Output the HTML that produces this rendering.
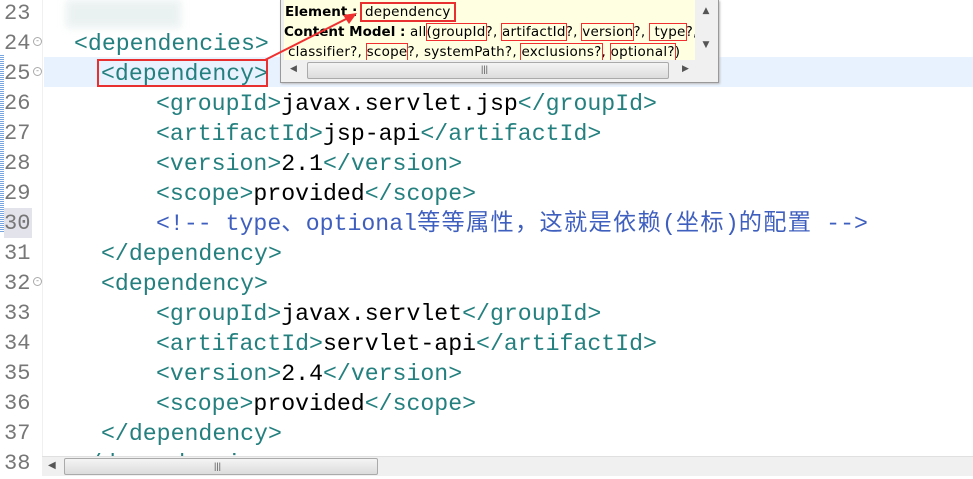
<!DOCTYPE html>
<html><head><meta charset="utf-8"><style>
body{margin:0;width:973px;height:475px;overflow:hidden;background:#fff;position:relative;font-family:"Liberation Mono","Noto Sans CJK SC",monospace}
.ln{position:absolute;left:4px;font-size:22px;color:#777;line-height:30px;height:30px}
.fold{position:absolute;left:33px;width:7px;height:7px;border:1px solid #aaa;border-radius:50%;font-size:8px;line-height:7px;text-align:center;color:#888}
.code{position:absolute;font-size:23.2px;line-height:30px;white-space:pre;color:#000}
.t{color:#24807f}.c{color:#3f5fbf}.k{letter-spacing:1.3px}
.r{outline:1px solid #f03030;outline-offset:0}
</style></head><body>
<div style="position:absolute;left:0;top:55px;width:4px;height:178px;background:repeating-linear-gradient(#7aa6e0 0 1px,#fff 1px 2px)"></div>
<div style="position:absolute;left:42px;top:0;width:1px;height:456px;background:#f0f0f0"></div>
<div style="position:absolute;left:44px;top:57px;width:929px;height:30px;background:#e8f2fe"></div>
<div style="position:absolute;left:4px;top:208px;width:28px;height:30px;background:#e3e3ec"></div>
<div style="position:absolute;left:66px;top:0;width:115px;height:28px;background:#e6eeee;filter:blur(4px);opacity:.8"></div>
<div class="ln" style="top:-1px">23</div><div class="ln" style="top:29px">24</div><div class="ln" style="top:59px">25</div><div class="ln" style="top:89px">26</div><div class="ln" style="top:119px">27</div><div class="ln" style="top:149px">28</div><div class="ln" style="top:179px">29</div><div class="ln" style="top:209px">30</div><div class="ln" style="top:239px">31</div><div class="ln" style="top:269px">32</div><div class="ln" style="top:299px">33</div><div class="ln" style="top:329px">34</div><div class="ln" style="top:359px">35</div><div class="ln" style="top:389px">36</div><div class="ln" style="top:419px">37</div><div class="ln" style="top:449px">38</div>
<div class="fold" style="top:37px">-</div><div class="fold" style="top:67px">-</div><div class="fold" style="top:277px">-</div>
<div class="code" style="left:74px;top:29px"><span class="t">&lt;dependencies&gt;</span></div>
<div class="code" style="left:101px;top:59px"><span class="t">&lt;dependency&gt;</span></div>
<div class="code" style="left:156px;top:89px"><span class="t">&lt;groupId&gt;</span>javax.servlet.jsp<span class="t">&lt;/groupId&gt;</span></div>
<div class="code" style="left:156px;top:119px"><span class="t">&lt;artifactId&gt;</span>jsp-api<span class="t">&lt;/artifactId&gt;</span></div>
<div class="code" style="left:156px;top:149px"><span class="t">&lt;version&gt;</span>2.1<span class="t">&lt;/version&gt;</span></div>
<div class="code" style="left:156px;top:179px"><span class="t">&lt;scope&gt;</span>provided<span class="t">&lt;/scope&gt;</span></div>
<div class="code c" style="left:156px;top:209px">&lt;!-- type<span class="k">、</span>optional<span class="k">等等属性，这就是依赖</span>(<span class="k">坐标</span>)<span class="k">的配置</span> --&gt;</div>
<div class="code" style="left:101px;top:239px"><span class="t">&lt;/dependency&gt;</span></div>
<div class="code" style="left:101px;top:269px"><span class="t">&lt;dependency&gt;</span></div>
<div class="code" style="left:156px;top:299px"><span class="t">&lt;groupId&gt;</span>javax.servlet<span class="t">&lt;/groupId&gt;</span></div>
<div class="code" style="left:156px;top:329px"><span class="t">&lt;artifactId&gt;</span>servlet-api<span class="t">&lt;/artifactId&gt;</span></div>
<div class="code" style="left:156px;top:359px"><span class="t">&lt;version&gt;</span>2.4<span class="t">&lt;/version&gt;</span></div>
<div class="code" style="left:156px;top:389px"><span class="t">&lt;scope&gt;</span>provided<span class="t">&lt;/scope&gt;</span></div>
<div class="code" style="left:101px;top:419px"><span class="t">&lt;/dependency&gt;</span></div>
<div class="code" style="left:74px;top:449px"><span class="t">&lt;/dependencies&gt;</span></div>
<!-- red box -->
<div style="position:absolute;left:97px;top:59px;width:167px;height:24px;border:2px solid #e83030"></div>
<!-- bottom scrollbar -->
<div style="position:absolute;left:42px;top:456px;width:931px;height:19px;background:#f0f0f0;border-top:1px solid #e0e0e0"></div>
<div style="position:absolute;left:48px;top:460px;font-size:10px;color:#555;font-family:'DejaVu Sans'">◀</div>
<div style="position:absolute;left:64px;top:458px;width:312px;height:15px;background:linear-gradient(#f4f4f4,#dcdcdc);border:1px solid #aaa;border-radius:2px"></div>
<div style="position:absolute;left:214px;top:461px;font-size:9px;color:#555;font-family:'Liberation Sans'">|||</div>
<!-- popup -->
<div style="position:absolute;left:280px;top:0;width:437px;height:82px;background:#f0f0f0;border:1px solid #999;border-top:none;box-shadow:1px 1px 2px #bbb"></div>
<div style="position:absolute;left:284px;top:0;width:411px;height:60px;overflow:hidden;background:#ffffe1;font-family:'DejaVu Sans','Liberation Sans',sans-serif;font-size:13.5px;line-height:20px;color:#000;white-space:nowrap;letter-spacing:0.25px">
<div style="padding-left:1px;margin-top:2px"><b style="letter-spacing:0">Element :</b> <span style="outline:2px solid #e83030;padding:0 3px">dependency</span></div>
<div><b style="letter-spacing:0">Content Model :</b> all<span class="r">(groupId</span>?, <span class="r">artifactId</span>?, <span class="r">version</span>?, <span class="r">&nbsp;type</span>?,</div>
<div style="padding-left:4px">classifier?, <span class="r">scope</span>?, systemPath?, <span class="r">exclusions?</span>, <span class="r">optional?</span>)</div>
</div>
<div style="position:absolute;left:696px;top:0;width:20px;height:60px;background:#f0f0f0;font-size:9px;color:#555;text-align:center;font-family:'DejaVu Sans'"><div style="margin-top:6px">▲</div><div style="margin-top:24px">▼</div></div>
<div style="position:absolute;left:284px;top:60px;width:412px;height:20px;background:#f0f0f0"></div>
<div style="position:absolute;left:290px;top:64px;font-size:9px;color:#555;font-family:'DejaVu Sans'">◀</div>
<div style="position:absolute;left:307px;top:62px;width:360px;height:15px;background:linear-gradient(#f4f4f4,#dcdcdc);border:1px solid #aaa;border-radius:2px"></div>
<div style="position:absolute;left:481px;top:64px;font-size:9px;color:#555;font-family:'Liberation Sans'">|||</div>
<div style="position:absolute;left:682px;top:64px;font-size:9px;color:#555;font-family:'DejaVu Sans'">▶</div>
<svg style="position:absolute;left:0;top:0" width="973" height="475">
<line x1="265" y1="60" x2="350" y2="17" stroke="#f03030" stroke-width="2"/>
<polygon points="357,13 343,15 349,24" fill="#f03030"/>
</svg>
</body></html>
